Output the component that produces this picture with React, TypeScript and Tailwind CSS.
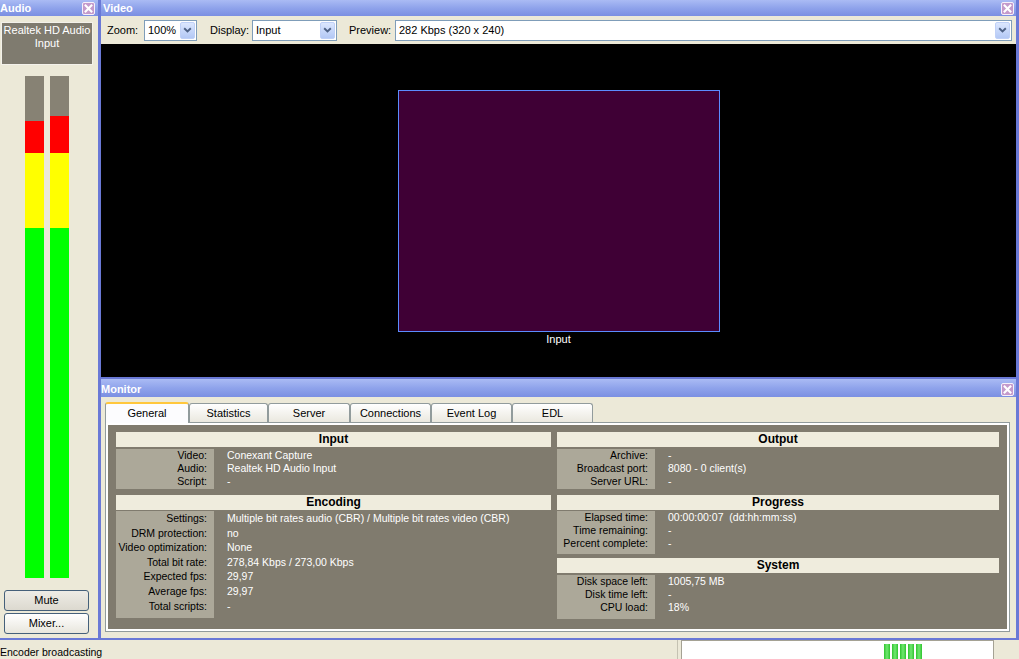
import React from "react";

const TITLE =
  "flex items-center justify-between bg-linear-to-b from-[#aabbf4] via-[#8fa3eb] to-[#7b8fe2] text-white font-bold text-[11px] pl-[2px] pr-[2px] shrink-0";

function CloseBtn() {
  return (
    <svg width="13" height="13" viewBox="0 0 13 13">
      <rect x="0.5" y="0.5" width="12" height="12" rx="1.5" fill="#c49acb" stroke="#f6f0fa" />
      <path d="M3.6 3.6 L9.4 9.4 M9.4 3.6 L3.6 9.4" stroke="#ffffff" strokeWidth="2.1" strokeLinecap="square" />
    </svg>
  );
}

function Combo({ value, className }: { value: string; className: string }) {
  return (
    <div className={`h-[21px] bg-white border border-[#7f9db9] flex items-center ${className}`}>
      <span className="flex-1 pl-[3px] text-[11px] leading-none">{value}</span>
      <div className="w-[15px] h-[17px] mr-[1px] rounded-[2px] bg-linear-to-b from-[#dce7fe] to-[#b3c8f5] border border-[#bfd0f7] flex items-center justify-center">
        <svg width="9" height="6" viewBox="0 0 9 6">
          <path d="M1.2 1.2 L4.5 4.4 L7.8 1.2" stroke="#4d6185" strokeWidth="1.9" fill="none" />
        </svg>
      </div>
    </div>
  );
}

function XpButton({ label, pressed }: { label: string; pressed?: boolean }) {
  return (
    <div
      className={`w-[85px] h-[21px] rounded-[3px] border border-[#45607a] flex items-center justify-center text-[11px] ${
        pressed ? "bg-linear-to-b from-[#eeece6] to-[#dcd9cf]" : "bg-linear-to-b from-[#ffffff] to-[#e8e6dd]"
      }`}
    >
      {label}
    </div>
  );
}

type Row = [string, string];

function Section({
  title,
  rows,
  body,
  lead,
  className = "",
}: {
  title: string;
  rows: Row[];
  body: string;
  lead: string;
  className?: string;
}) {
  return (
    <div className={className}>
      <div className="h-[15px] bg-[#efecdd] text-center font-bold text-[12px] leading-[15px] text-black">{title}</div>
      <div className={`flex ${body}`}>
        <div className="w-[98px] bg-[#aca899] text-right pr-[7px] text-black">
          {rows.map(([k]) => (
            <div key={k} className={`${lead} whitespace-nowrap`}>
              {k}
            </div>
          ))}
        </div>
        <div className="flex-1 pl-[13px] text-white">
          {rows.map(([k, v]) => (
            <div key={k} className={`${lead} whitespace-pre`}>
              {v}
            </div>
          ))}
        </div>
      </div>
    </div>
  );
}

const tabs: [string, string][] = [
  ["General", "w-[84px]"],
  ["Statistics", "w-[79px]"],
  ["Server", "w-[82px]"],
  ["Connections", "w-[81px]"],
  ["Event Log", "w-[81px]"],
  ["EDL", "w-[81px]"],
];

export default function App() {
  return (
    <div className="w-[1019px] h-[659px] overflow-hidden bg-[#ece9d8] flex flex-col font-['Liberation_Sans',Arial,sans-serif] text-black select-none">
      <div className="flex h-[638px]">
        {/* audio panel */}
        <div className="w-[98px] flex flex-col">
          <div className={`${TITLE} h-[16px]`}>
            <span className="-ml-[2px]">Audio</span>
            <span className="mr-[1px]">
              <CloseBtn />
            </span>
          </div>
          <div className="mt-[6px] ml-[1px] w-[92px] h-[43px] bg-[#7f7b6f] border border-[#f3f1ea] text-white text-[11px] leading-[13px] text-center pt-[0.5px]">
            Realtek HD Audio
            <br />
            Input
          </div>
          <div className="mt-[11px] ml-[25px] flex gap-[6px] h-[502px]">
            <div className="w-[19px] flex flex-col">
              <div className="h-[45px] bg-[#878274]" />
              <div className="h-[32px] bg-[#ff0000]" />
              <div className="h-[75px] bg-[#ffff00]" />
              <div className="flex-1 bg-[#00ff00]" />
            </div>
            <div className="w-[19px] flex flex-col">
              <div className="h-[40px] bg-[#878274]" />
              <div className="h-[37px] bg-[#ff0000]" />
              <div className="h-[75px] bg-[#ffff00]" />
              <div className="flex-1 bg-[#00ff00]" />
            </div>
          </div>
          <div className="mt-[12px] ml-[4px] flex flex-col gap-[2px]">
            <XpButton label="Mute" pressed />
            <XpButton label="Mixer..." />
          </div>
        </div>

        <div className="w-[3px] bg-[#6a79d6]" />

        {/* right column */}
        <div className="flex-1 flex flex-col">
          <div className={`${TITLE} h-[16px]`}>
            <span>Video</span>
            <CloseBtn />
          </div>
          <div className="h-[28px] flex items-center pl-[6px] pr-[4px] text-[11px]">
            <span className="w-[37px]">Zoom:</span>
            <Combo value="100%" className="w-[53px]" />
            <span className="ml-[13px] w-[42px]">Display:</span>
            <Combo value="Input" className="w-[85px]" />
            <span className="ml-[12px] w-[46px]">Preview:</span>
            <Combo value="282 Kbps (320 x 240)" className="flex-1" />
          </div>
          <div className="h-[333px] bg-black flex flex-col items-center pt-[46px]">
            <div className="w-[322px] h-[242px] bg-[#3f0035] border border-[#5b8cff]" />
            <div className="text-white text-[11px] leading-[14px]">Input</div>
          </div>

          <div className="h-[2px] bg-[#6a79d6]" />

          <div className={`${TITLE} h-[18px] pt-[2px]`}>
            <span className="-ml-[2px]">Monitor</span>
            <CloseBtn />
          </div>
          <div className="flex-1 pl-[4px] pr-[6px] pt-[5px] flex flex-col">
            <div className="flex items-end h-[20px] text-[11px]">
              {tabs.map(([t, w], i) =>
                i === 0 ? (
                  <div
                    key={t}
                    className={`${w} h-[21px] -mb-[1px] relative z-10 bg-[#fcfcfe] border border-[#919b9c] border-b-0 border-t-[2px] border-t-[#ffc73c] rounded-t-[3px] flex items-center justify-center`}
                  >
                    {t}
                  </div>
                ) : (
                  <div
                    key={t}
                    className={`${w} h-[19px] bg-linear-to-b from-[#ffffff] to-[#eae8df] border border-[#919b9c] border-b-0 rounded-t-[3px] flex items-center justify-center`}
                  >
                    {t}
                  </div>
                )
              )}
            </div>
            <div className="h-[210px] border border-[#919b9c] bg-white p-[2px]">
              <div className="h-full bg-[#807b6e] pl-[8px] pr-[8px] pt-[7px] flex gap-[6px] text-[10.5px]">
                <div className="w-[435px]">
                  <Section
                    title="Input"
                    body="h-[42px] pt-[2px]"
                    lead="leading-[13px]"
                    rows={[
                      ["Video:", "Conexant Capture"],
                      ["Audio:", "Realtek HD Audio Input"],
                      ["Script:", "-"],
                    ]}
                  />
                  <Section
                    className="mt-[6px]"
                    title="Encoding"
                    body="h-[108px] pt-[1px]"
                    lead="leading-[14.6px]"
                    rows={[
                      ["Settings:", "Multiple bit rates audio (CBR) / Multiple bit rates video (CBR)"],
                      ["DRM protection:", "no"],
                      ["Video optimization:", "None"],
                      ["Total bit rate:", "278,84 Kbps / 273,00 Kbps"],
                      ["Expected fps:", "29,97"],
                      ["Average fps:", "29,97"],
                      ["Total scripts:", "-"],
                    ]}
                  />
                </div>
                <div className="flex-1">
                  <Section
                    title="Output"
                    body="h-[42px] pt-[2px]"
                    lead="leading-[13px]"
                    rows={[
                      ["Archive:", "-"],
                      ["Broadcast port:", "8080 - 0 client(s)"],
                      ["Server URL:", "-"],
                    ]}
                  />
                  <Section
                    className="mt-[6px]"
                    title="Progress"
                    body="h-[44px] pt-[1px]"
                    lead="leading-[13.2px]"
                    rows={[
                      ["Elapsed time:", "00:00:00:07  (dd:hh:mm:ss)"],
                      ["Time remaining:", "-"],
                      ["Percent complete:", "-"],
                    ]}
                  />
                  <Section
                    className="mt-[4px]"
                    title="System"
                    body="h-[46px] pt-[2px]"
                    lead="leading-[13px]"
                    rows={[
                      ["Disk space left:", "1005,75 MB"],
                      ["Disk time left:", "-"],
                      ["CPU load:", "18%"],
                    ]}
                  />
                </div>
              </div>
            </div>
          </div>
        </div>

        <div className="w-[3px] bg-[#6a79d6]" />
      </div>

      <div className="h-[2px] bg-[#6a79d6]" />

      {/* status bar */}
      <div className="h-[19px] flex items-stretch text-[10.5px]">
        <span className="pt-[6px] leading-[13px]">Encoder broadcasting</span>
        <div className="ml-auto w-[1px] bg-[#c5c2b2] mr-[3px]" />
        <div className="w-[313px] bg-white border border-b-0 border-[#a5a294] pl-[202px] pt-[3px] flex gap-[2px]">
          {[0, 1, 2, 3, 4].map((i) => (
            <div key={i} className="w-[6px] bg-linear-to-r from-[#2cc42c] via-[#6fe86f] to-[#2cc42c]" />
          ))}
        </div>
        <div className="w-[25px]" />
      </div>
    </div>
  );
}
